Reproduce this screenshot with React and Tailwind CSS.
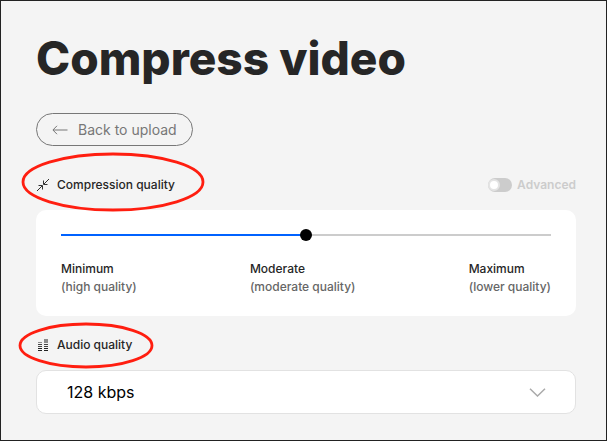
import { useState } from "react";

const levels = [
  { name: "Minimum", note: "(high quality)" },
  { name: "Moderate", note: "(moderate quality)" },
  { name: "Maximum", note: "(lower quality)" },
];

const bitrates = ["64 kbps", "128 kbps", "192 kbps", "256 kbps"];

function ArrowLeftIcon() {
  return (
    <svg width="16" height="10" viewBox="0 0 16 10" fill="none" stroke="currentColor" aria-hidden="true">
      <path d="M15.5 5H1M5 0.8L0.9 5L5 9.2" />
    </svg>
  );
}

function CompressIcon() {
  return (
    <svg width="14" height="14" viewBox="0 0 14 14" fill="none" stroke="#333" aria-hidden="true">
      <path d="M1 13L6 8M2.5 7.5H6.5V11.5M13 1L8 6M7.5 2.5V6.5H11.5" />
    </svg>
  );
}

function LevelsIcon() {
  return (
    <svg width="14" height="14" viewBox="0 0 14 14" aria-hidden="true">
      <rect x="8" y="1" width="4" height="4" fill="#8c8c8c" />
      <rect x="2" y="4" width="4" height="1" fill="#8c8c8c" />
      <path d="M2 6h4v1H2zM8 6h4v1H8zM2 8h4v1H2zM8 8h4v1H8z" fill="#444" />
      <path d="M2 10h4v1H2zM8 10h4v1H8zM2 12h4v1H2zM8 12h4v1H8z" fill="#222" />
    </svg>
  );
}

function Highlight({ className }) {
  return (
    <svg className={`absolute pointer-events-none overflow-visible ${className}`} fill="none" stroke="#ff1e10" strokeWidth="2.8" aria-hidden="true">
      <ellipse cx="50%" cy="50%" rx="50%" ry="50%" />
    </svg>
  );
}

export default function App() {
  const [quality, setQuality] = useState(50);
  const [bitrate, setBitrate] = useState("128 kbps");
  const [advanced, setAdvanced] = useState(false);

  return (
    <main className="min-h-screen border border-[#222] bg-[#f4f4f4] pl-[35px] pr-[30px] pt-7 pb-[26px] font-[Inter,sans-serif] text-[#262626]">
      <h1 className="text-[46px] leading-[58px] font-extrabold">Compress video</h1>

      <button type="button" className="mt-[26px] flex h-[33px] items-center gap-2.5 rounded-full border border-[#777] px-[15px] text-sm text-[#777]">
        <ArrowLeftIcon />
        Back to upload
      </button>

      {/* Compression */}
      <div className="mt-[29px] flex h-5 items-center justify-between">
        <label htmlFor="quality" className="relative flex items-center gap-[7px] text-xs font-medium">
          <CompressIcon />
          Compression quality
          <Highlight className="-left-[13px] -top-[23px] h-14 w-[180px]" />
        </label>
        <label className="flex items-center gap-[5px] text-xs font-semibold text-[#ccc]">
          <input
            type="checkbox"
            role="switch"
            checked={advanced}
            onChange={(e) => setAdvanced(e.target.checked)}
            className="h-3.5 w-6 appearance-none rounded-full bg-[#ccc] before:block before:size-3 before:translate-y-px before:rounded-full before:border-2 before:border-[#e4e4e4] before:bg-white checked:bg-[#0062ff] checked:before:translate-x-3"
          />
          Advanced
        </label>
      </div>

      <section className="mt-[15px] rounded-[10px] bg-white px-[25px] pt-[19px] pb-5">
        <input
          id="quality"
          type="range"
          min="0"
          max="100"
          value={quality}
          onChange={(e) => setQuality(Number(e.target.value))}
          style={{ backgroundImage: `linear-gradient(to right, #0062ff ${quality}%, #ccc ${quality}%)` }}
          className="block h-3 w-full appearance-none bg-transparent bg-[length:100%_2px] bg-center bg-no-repeat [&::-webkit-slider-thumb]:size-3 [&::-webkit-slider-thumb]:appearance-none [&::-webkit-slider-thumb]:rounded-full [&::-webkit-slider-thumb]:bg-black"
        />
        <ul className="mt-[19px] flex justify-between text-xs leading-[18px] font-medium">
          {levels.map((level) => (
            <li key={level.name}>
              <p>{level.name}</p>
              <p className="text-[#666]">{level.note}</p>
            </li>
          ))}
        </ul>
      </section>

      {/* Audio */}
      <label htmlFor="bitrate" className="relative mt-[19px] flex h-5 w-fit items-center gap-[7px] text-xs font-medium">
        <LevelsIcon />
        Audio quality
        <Highlight className="-left-4 -top-[11px] h-[43px] w-[132px]" />
      </label>

      <div className="relative mt-[15px]">
        <select
          id="bitrate"
          value={bitrate}
          onChange={(e) => setBitrate(e.target.value)}
          className="h-11 w-full appearance-none rounded-[10px] border border-[#e2e2e2] bg-white px-[30px] text-base text-black"
        >
          {bitrates.map((rate) => (
            <option key={rate}>{rate}</option>
          ))}
        </select>
        <svg className="pointer-events-none absolute right-[30px] top-[18px]" width="17" height="9" viewBox="0 0 17 9" fill="none" stroke="#aaa" strokeWidth="1.5" aria-hidden="true">
          <path d="M1 0.8L8.5 8L16 0.8" />
        </svg>
      </div>
    </main>
  );
}
